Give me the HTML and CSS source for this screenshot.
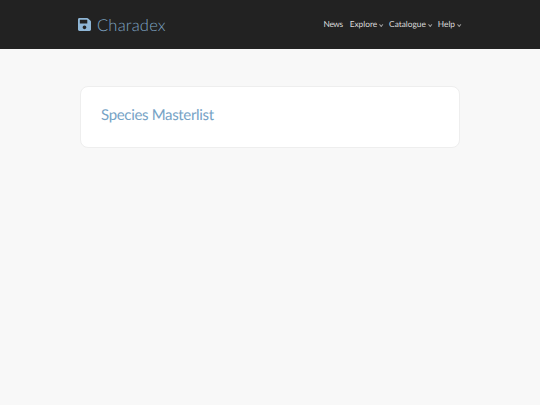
FILE: index.html
```html
<!DOCTYPE html>
<html lang="en">

<head>
    <meta charset="UTF-8">
    <meta name="viewport" content="width=device-width, initial-scale=1.0">
    <title>Charadex</title>
    <link rel="stylesheet" href="styles.css">
</head>

<body>
    <header class="navbar">
        <a class="brand" href="#">
            <svg class="brand-icon" viewBox="0 32 448 448" aria-hidden="true">
                <path d="M433.941 129.941l-83.882-83.882A48 48 0 0 0 316.118 32H48C21.49 32 0 53.49 0 80v352c0 26.51 21.49 48 48 48h352c26.51 0 48-21.49 48-48V163.882a48 48 0 0 0-14.059-33.941zM224 416c-35.346 0-64-28.654-64-64 0-35.346 28.654-64 64-64s64 28.654 64 64c0 35.346-28.654 64-64 64zm96-304.52V212c0 6.627-5.373 12-12 12H76c-6.627 0-12-5.373-12-12V108c0-6.627 5.373-12 12-12h228.52c3.183 0 6.235 1.264 8.485 3.515l3.48 3.48A11.996 11.996 0 0 1 320 111.48z"/>
            </svg>
            <span>Charadex</span>
        </a>
        <ul class="nav">
            <li class="nav-news">News</li>
            <li class="dropdown">Explore</li>
            <li class="dropdown">Catalogue</li>
            <li class="dropdown">Help</li>
        </ul>
    </header>

    <main class="content">
        <div class="card">
            <h1>Species Masterlist</h1>
        </div>
    </main>
</body>

</html>
```

FILE: styles.css
```css
* {
    margin: 0;
    padding: 0;
    box-sizing: border-box;
}

ul {
    list-style: none;
}

body {
    height: 405px;
    overflow: hidden;
    background: #f8f8f8;
    font-family: "Lato", "Open Sans", sans-serif;
    text-rendering: geometricPrecision;
}

.navbar {
    height: 49px;
    padding: 0 80px 0 78px;
    background: #222222;
    display: flex;
    justify-content: space-between;
    align-items: center;
}

.brand {
    display: flex;
    align-items: center;
    gap: 6px;
    color: #7fa5c2;
    font-size: 16.5px;
    font-weight: 300;
    letter-spacing: 0.2px;
    text-decoration: none;
}

.brand-icon {
    width: 13px;
    height: 13px;
    margin-bottom: 1px;
    fill: #8fb6d6;
}

.nav {
    display: flex;
    gap: 7px;
    margin-bottom: 1px;
    color: #dcdcdc;
    font-size: 8.3px;
}

.nav-news {
    letter-spacing: -0.4px;
}

.dropdown::after {
    content: "";
    display: inline-block;
    width: 2px;
    height: 2px;
    margin-left: 2px;
    border-right: 1px solid #999999;
    border-bottom: 1px solid #999999;
    transform: rotate(45deg) translateY(-1px);
}

.content {
    padding: 37px 80px 0;
}

.card {
    height: 62px;
    padding: 0 20px 4px;
    background: #ffffff;
    border: 1px solid #eeeeee;
    border-radius: 8px;
    display: flex;
    align-items: center;
}

.card h1 {
    color: #76a3c6;
    font-size: 15px;
    font-weight: 400;
    letter-spacing: -0.33px;
}
```
